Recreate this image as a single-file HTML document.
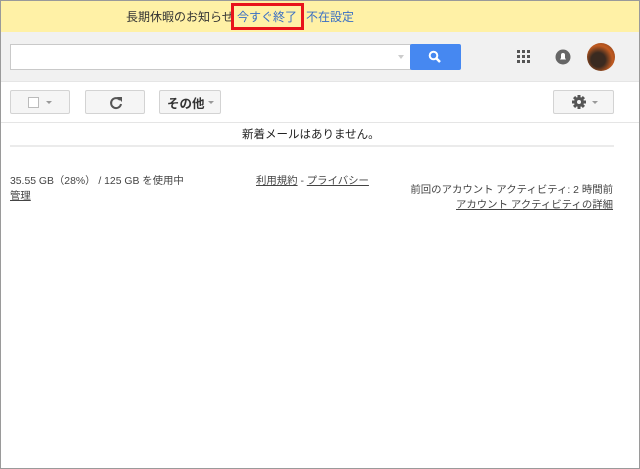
<!DOCTYPE html>
<html><head><meta charset="utf-8"><style>
*{margin:0;padding:0;box-sizing:border-box}
body{width:640px;height:469px;position:relative;background:#fff;font-family:"Liberation Sans","Noto Sans CJK JP",sans-serif;overflow:hidden}
.frame{position:absolute;left:0;top:0;width:640px;height:469px;border:1px solid #9a9a9a;pointer-events:none}
.banner{position:absolute;left:0;top:0;width:640px;height:32px;background:#fff1a6;font-size:12px;color:#333}
.abs{position:absolute;white-space:nowrap}
.hdr{position:absolute;left:0;top:32px;width:640px;height:50px;background:#f1f1f1;border-bottom:1px solid #e5e5e5}
.btn{position:absolute;top:90px;height:24px;background:#f5f5f5;border:1px solid #d3d3d3;border-radius:2px}
a{color:#444;text-decoration:underline}
.s{font-size:10.4px;color:#444}
</style></head><body>
<div class="banner">
 <span class="abs" style="left:126px;top:8px">長期休暇のお知らせ</span>
 <span class="abs" style="left:237px;top:8px;color:#3a6fc4">今すぐ終了</span>
 <span class="abs" style="left:306px;top:8px;color:#3a6fc4">不在設定</span>
 <div class="abs" style="left:231px;top:3px;width:73px;height:27px;border:3px solid #e8141b"></div>
</div>
<div class="hdr">
 <div class="abs" style="left:10px;top:12px;width:401px;height:26px;background:#fff;border:1px solid #c9c9c9"></div>
 <div class="abs" style="left:398px;top:23px;width:0;height:0;border-left:3px solid transparent;border-right:3px solid transparent;border-top:4px solid #ccc"></div>
 <div class="abs" style="left:410px;top:12px;width:51px;height:26px;background:#4688f1;border-radius:2px"></div>
 <svg class="abs" style="left:427px;top:17px" width="16" height="16"><circle cx="6.5" cy="6.5" r="3.8" fill="none" stroke="#fff" stroke-width="2"/><path d="M9 9l4 4" stroke="#fff" stroke-width="2.5"/></svg>
 <svg class="abs" style="left:517px;top:18px" width="14" height="14" fill="#555"><rect x="0" y="0" width="3" height="3"/><rect x="5" y="0" width="3" height="3"/><rect x="10" y="0" width="3" height="3"/><rect x="0" y="5" width="3" height="3"/><rect x="5" y="5" width="3" height="3"/><rect x="10" y="5" width="3" height="3"/><rect x="0" y="10" width="3" height="3"/><rect x="5" y="10" width="3" height="3"/><rect x="10" y="10" width="3" height="3"/></svg>
 <svg class="abs" style="left:555px;top:17px" width="16" height="16"><circle cx="8" cy="8" r="7.5" fill="#666"/><path d="M5 10.5h6l-1-1.5v-3a2 2 0 0 0-4 0v3z" fill="#fff"/></svg>
 <div class="abs" style="left:587px;top:11px;width:28px;height:28px;border-radius:50%;background:radial-gradient(circle at 40% 60%,#3a2a20 0 30%,#c05a20 60%,#7a3a1a)"></div>
</div>
<div class="btn" style="left:10px;width:60px"><div class="abs" style="left:17px;top:6px;width:11px;height:11px;border:1px solid #bbb;background:#fff"></div><div class="abs" style="left:35px;top:10px;border-left:3px solid transparent;border-right:3px solid transparent;border-top:3px solid #999"></div></div>
<div class="btn" style="left:85px;width:60px"><svg class="abs" style="left:22px;top:4px" width="16" height="16"><path d="M12 5A5 5 0 1 0 13 9" fill="none" stroke="#555" stroke-width="2"/><path d="M9 2l5 0l0 5z" fill="#555"/></svg></div>
<div class="btn" style="left:159px;width:62px"><span class="abs" style="left:7px;top:2px;font-size:12.5px;font-weight:bold;color:#333">その他</span><div class="abs" style="left:48px;top:10px;border-left:3px solid transparent;border-right:3px solid transparent;border-top:3px solid #999"></div></div>
<div class="btn" style="left:553px;width:61px"><svg class="abs" style="left:17px;top:3px" width="16" height="16" viewBox="0 0 16 16"><g fill="#555"><circle cx="8" cy="8" r="5"/><rect x="6.5" y="1" width="3" height="14"/><rect x="1" y="6.5" width="14" height="3"/><rect x="6.5" y="1" width="3" height="14" transform="rotate(45 8 8)"/><rect x="6.5" y="1" width="3" height="14" transform="rotate(-45 8 8)"/></g><circle cx="8" cy="8" r="2" fill="#f5f5f5"/></svg><div class="abs" style="left:38px;top:10px;border-left:3px solid transparent;border-right:3px solid transparent;border-top:3px solid #999"></div></div>
<div class="abs" style="left:1px;top:122px;width:638px;height:1px;background:#e5e5e5"></div>
<span class="abs" style="left:242px;top:126px;font-size:11.5px;color:#222">新着メールはありません。</span>
<div class="abs" style="left:10px;top:145px;width:604px;height:2px;background:#ebebeb"></div>
<span class="abs s" style="left:10px;top:172px">35.55 GB（28%） / 125 GB を使用中</span>
<span class="abs s" style="left:10px;top:187px"><a>管理</a></span>
<span class="abs s" style="left:256px;top:172px"><a>利用規約</a> - <a>プライバシー</a></span>
<span class="abs s" style="right:27px;top:181px">前回のアカウント アクティビティ: 2 時間前</span>
<span class="abs s" style="right:27px;top:196px"><a>アカウント アクティビティの詳細</a></span>
<div class="frame"></div>
</body></html>
